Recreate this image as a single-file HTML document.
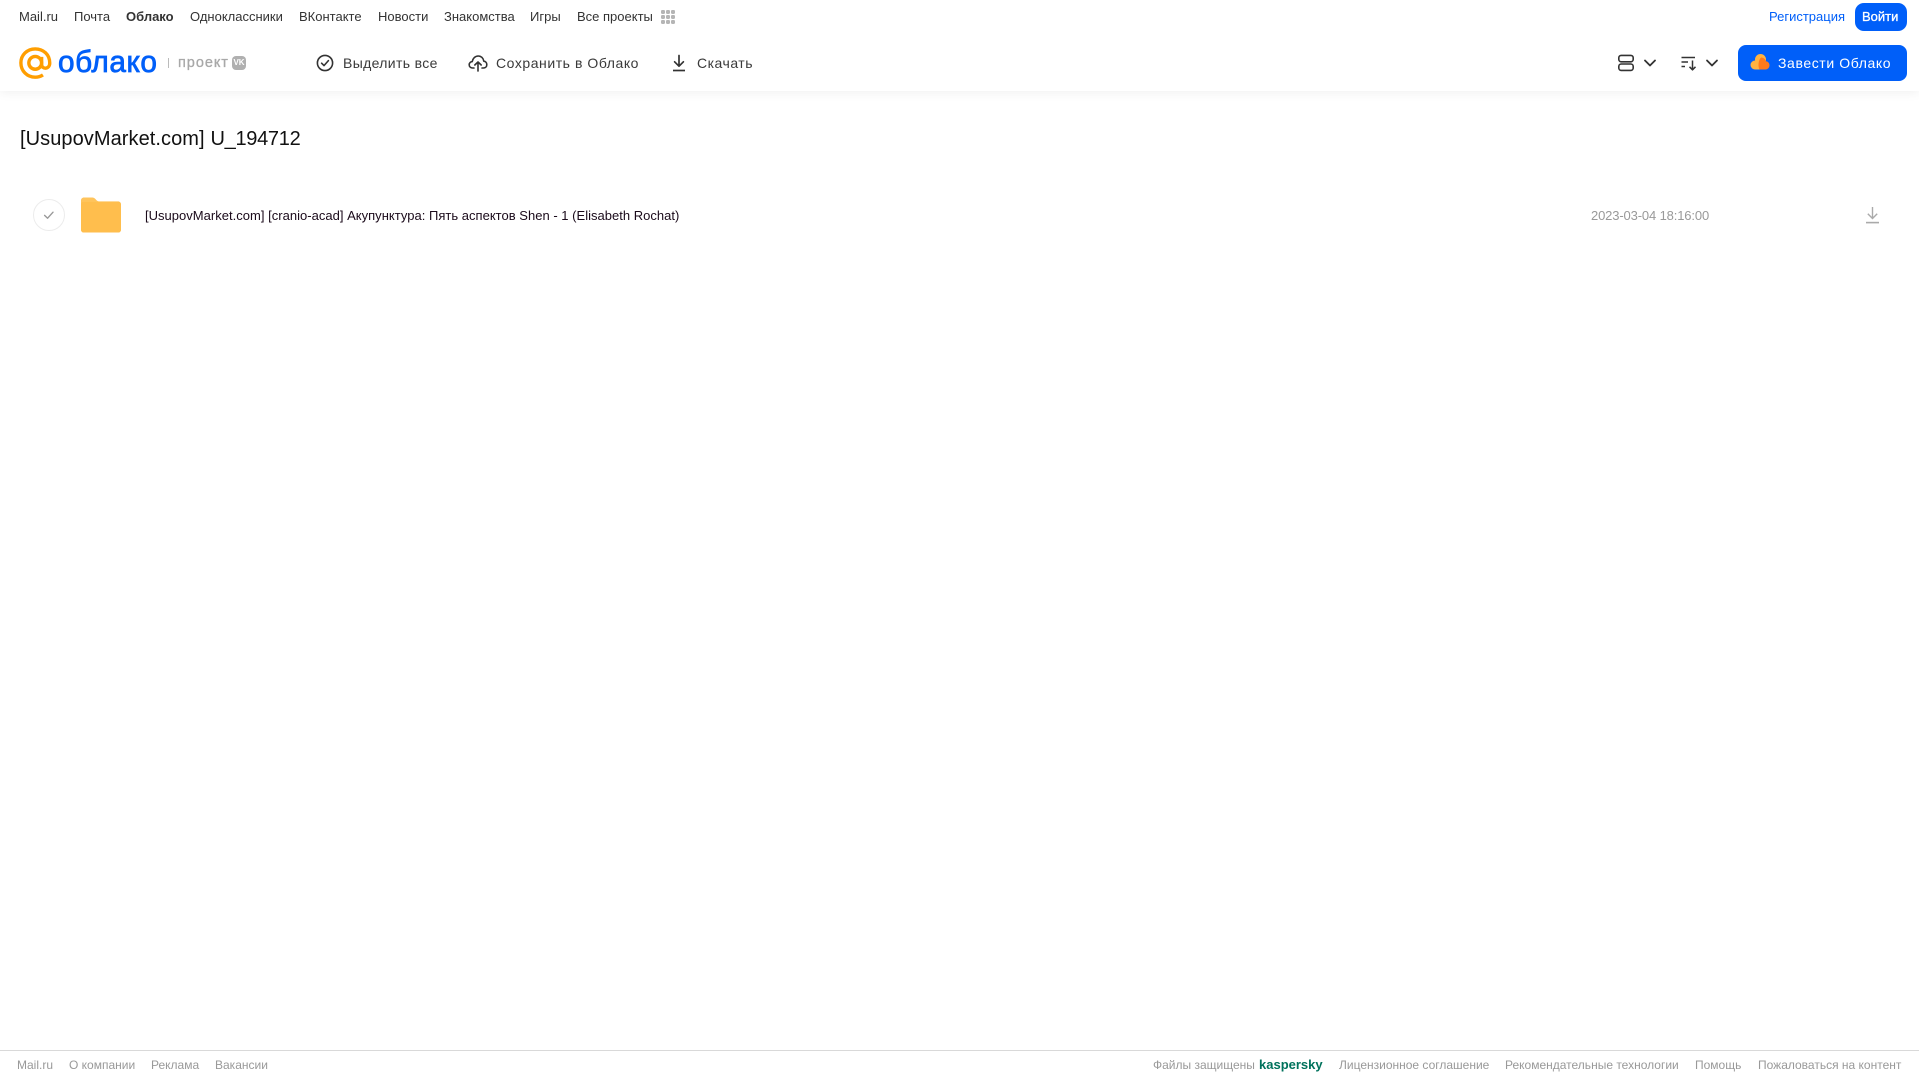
<!DOCTYPE html>
<html lang="ru">
<head>
<meta charset="utf-8">
<title>Облако</title>
<style>
html,body{margin:0;padding:0;background:#fff;}
body{width:1919px;height:1079px;position:relative;overflow:hidden;font-family:"Liberation Sans",Arial,sans-serif;}
.t{position:absolute;white-space:nowrap;line-height:16px;}
.n{font-size:13px;top:9px;color:#333;}
.a{font-size:14px;top:55px;color:#3a3a3a;letter-spacing:.35px;}
.f{font-size:12px;top:1057px;color:#999;}
svg{position:absolute;display:block;}
#hdrshadow{position:absolute;left:0;top:0;width:1919px;height:91px;background:#fff;box-shadow:0 2px 10px rgba(0,0,0,.06);}
</style>
</head>
<body>
<div id="hdrshadow"></div>

<span class="t n" style="left:19px">Mail.ru</span>
<span class="t n" style="left:74px">Почта</span>
<span class="t n" style="left:126px;font-weight:bold">Облако</span>
<span class="t n" style="left:190px">Одноклассники</span>
<span class="t n" style="left:299px">ВКонтакте</span>
<span class="t n" style="left:378px">Новости</span>
<span class="t n" style="left:444px">Знакомства</span>
<span class="t n" style="left:530px">Игры</span>
<span class="t n" style="left:577px">Все проекты</span>
<svg style="left:660px;top:9px" width="16" height="16" viewBox="0 0 16 16" fill="#b5b5b5">
<rect x="1" y="1" width="4" height="4" rx="1.2"/><rect x="6" y="1" width="4" height="4" rx="1.2"/><rect x="11" y="1" width="4" height="4" rx="1.2"/>
<rect x="1" y="6" width="4" height="4" rx="1.2"/><rect x="6" y="6" width="4" height="4" rx="1.2"/><rect x="11" y="6" width="4" height="4" rx="1.2"/>
<rect x="1" y="11" width="4" height="4" rx="1.2"/><rect x="6" y="11" width="4" height="4" rx="1.2"/><rect x="11" y="11" width="4" height="4" rx="1.2"/>
</svg>

<span class="t n" style="left:1769px;color:#005ff9">Регистрация</span>
<div style="position:absolute;left:1855px;top:3px;width:52px;height:28px;border-radius:9px;background:#005ff9"></div>
<span class="t n" style="left:1862px;color:#fff;-webkit-text-stroke:.3px #fff">Войти</span>

<svg style="left:19px;top:47px" width="33" height="33" viewBox="0 0 35 35" fill="none" stroke="#ff9e00" stroke-width="3.6">
<circle cx="17.2" cy="16.8" r="6.8"/>
<path d="M24 10.5V18.5C24 24 32.6 24 32.6 17C32.6 8 25.8 2 17.2 2C8.5 2 2 8.6 2 16.8C2 25.4 8.6 32 17.2 32C20.4 32 23 31.2 25.4 29.6"/>
</svg>
<span class="t" id="logo" style="left:58px;top:44px;font-size:31px;line-height:36px;font-weight:normal;-webkit-text-stroke:.8px #005ff9;color:#005ff9;letter-spacing:.6px;transform:scaleX(.96);transform-origin:0 50%">облако</span>
<div style="position:absolute;left:168px;top:58px;width:1px;height:10px;background:#bbb"></div>
<span class="t" style="left:178px;top:55px;font-size:14.5px;color:#a8a8a8;-webkit-text-stroke:.3px #a8a8a8;letter-spacing:.95px">проект</span>
<div style="position:absolute;left:232px;top:56px;width:14px;height:14px;border-radius:4px;background:#b0b0b0;color:#fff;font:bold 8px/14px 'Liberation Sans',sans-serif;text-align:center">VK</div>

<svg style="left:316px;top:54px" width="18" height="18" viewBox="0 0 18 18" fill="none" stroke="#333" stroke-width="1.6">
<circle cx="9" cy="9" r="7.6"/><path d="M5.6 9.2L8 11.6L12.4 6.6" stroke-linecap="round" stroke-linejoin="round"/>
</svg>
<span class="t a" style="left:343px">Выделить все</span>

<svg style="left:468px;top:54px" width="20" height="18" viewBox="0 0 20 18" fill="none" stroke="#333" stroke-width="1.6" stroke-linecap="round" stroke-linejoin="round">
<path d="M6 14H4.6C2.6 14 1.2 12.6 1.2 10.8C1.2 9 2.6 7.8 4.2 7.6C4.8 4.4 7.2 2 10.2 2C13.2 2 15.4 4.2 15.8 7.2C17.6 7.4 18.8 8.8 18.8 10.6C18.8 12.6 17.4 14 15.4 14H14"/>
<path d="M10 17V8.4M6.8 11L10 8L13.2 11"/>
</svg>
<span class="t a" style="left:496px;letter-spacing:.55px">Сохранить в Облако</span>

<svg style="left:670px;top:54px" width="18" height="18" viewBox="0 0 18 18" fill="none" stroke="#333" stroke-width="1.7" stroke-linecap="round" stroke-linejoin="round">
<path d="M9 1.5V12M4.6 7.8L9 12.2L13.4 7.8"/><path d="M3 16.5H15" stroke-linecap="butt"/>
</svg>
<span class="t a" style="left:697px;letter-spacing:.5px">Скачать</span>

<svg style="left:1617px;top:54px" width="18" height="18" viewBox="0 0 18 18" fill="none" stroke="#333" stroke-width="1.6">
<rect x="1.8" y="1.4" width="14.4" height="6.4" rx="2.4"/><rect x="1.8" y="10" width="14.4" height="6.4" rx="2.4"/>
</svg>
<svg style="left:1643px;top:58px" width="14" height="10" viewBox="0 0 14 10" fill="none" stroke="#333" stroke-width="1.8" stroke-linecap="round" stroke-linejoin="round"><path d="M2 2.5L7 7.5L12 2.5"/></svg>
<svg style="left:1680px;top:54px" width="18" height="18" viewBox="0 0 18 18" fill="none" stroke="#333" stroke-width="1.5" stroke-linejoin="round">
<path d="M1.5 3.5H15M1.5 8H8M1.5 12.5H5"/><path d="M12.5 6.5V15.5M9.5 12.8L12.5 15.8L15.5 12.8"/>
</svg>
<svg style="left:1705px;top:58px" width="14" height="10" viewBox="0 0 14 10" fill="none" stroke="#333" stroke-width="1.8" stroke-linecap="round" stroke-linejoin="round"><path d="M2 2.5L7 7.5L12 2.5"/></svg>

<div style="position:absolute;left:1738px;top:45px;width:169px;height:36px;border-radius:8px;background:#005ff9"></div>
<svg style="left:1750px;top:53px" width="21" height="19" viewBox="0 0 21 19">
<circle cx="10.5" cy="6.5" r="5.5" fill="#ffb340"/><circle cx="5" cy="12" r="4.5" fill="#ffb340"/><rect x="3" y="9" width="14" height="7.5" rx="3" fill="#ffb340"/>
<path d="M11 4.5C14 4.5 15.5 6.5 15.8 8.2C18 8.4 19.5 10 19.5 12.2C19.5 14.8 17.5 16.5 15 16.5H9.5C8 14 8 7.5 11 4.5Z" fill="#ff7a1a"/>
</svg>
<span class="t a" style="left:1778px;color:#fff;letter-spacing:.6px">Завести Облако</span>

<span class="t" style="left:20px;top:126px;font-size:20px;line-height:26px;color:#111;letter-spacing:.07px">[UsupovMarket.com]</span>
<span class="t" style="left:210.5px;top:126px;font-size:20px;line-height:26px;color:#111;letter-spacing:-.3px">U_194712</span>

<svg style="left:32px;top:198px" width="34" height="34" viewBox="0 0 34 34" fill="none">
<circle cx="17" cy="17" r="15.5" stroke="#ececec" stroke-width="1"/>
<path d="M12.6 17.4L15.6 20.2L21 14.2" stroke="#999" stroke-width="1.4" stroke-linecap="round" stroke-linejoin="round"/>
</svg>
<svg style="left:81px;top:197px" width="40" height="36" viewBox="0 0 41 36">
<path d="M0 3C0 1.3 1.3 0 3 0H11.5C13 0 14 .6 15 1.8C16 3 17 4 18.5 4H38C39.7 4 41 5.3 41 7V33C41 34.7 39.7 36 38 36H3C1.3 36 0 34.7 0 33Z" fill="#ffc45c"/>
<path d="M0 7C0 5.5 1 4.5 2.5 4.5H38C39.7 4.5 41 5.8 41 7.5V33C41 34.7 39.7 36 38 36H3C1.3 36 0 34.7 0 33Z" fill="#ffbe4d"/>
</svg>
<span class="t" style="left:145px;top:208px;font-size:13px;color:#1a0a1a;letter-spacing:.015px">[UsupovMarket.com] [cranio-acad] Акупунктура: Пять аспектов Shen - 1 (Elisabeth Rochat)</span>
<span class="t" style="left:1591px;top:208px;font-size:13px;color:#999;letter-spacing:-.14px">2023-03-04 18:16:00</span>
<svg style="left:1864px;top:206px" width="17" height="18" viewBox="0 0 17 18" fill="none" stroke="#aaa" stroke-width="1.4">
<path d="M8.5 1V12M3.8 7.8L8.5 12.5L13.2 7.8"/><path d="M2 16.6H15" stroke-width="1.6"/>
</svg>

<div style="position:absolute;left:0;top:1050px;width:1919px;height:1px;background:#d9d9d9"></div>
<span class="t f" style="left:17px">Mail.ru</span>
<span class="t f" style="left:69px">О компании</span>
<span class="t f" style="left:151px">Реклама</span>
<span class="t f" style="left:215px">Вакансии</span>
<span class="t f" style="left:1153px">Файлы защищены</span>
<span class="t f" style="left:1259px;color:#00725c;font-weight:bold;font-size:13px">kaspersky</span>
<span class="t f" style="left:1339px">Лицензионное соглашение</span>
<span class="t f" style="left:1505px">Рекомендательные технологии</span>
<span class="t f" style="left:1695px">Помощь</span>
<span class="t f" style="left:1758px">Пожаловаться на контент</span>
</body>
</html>
